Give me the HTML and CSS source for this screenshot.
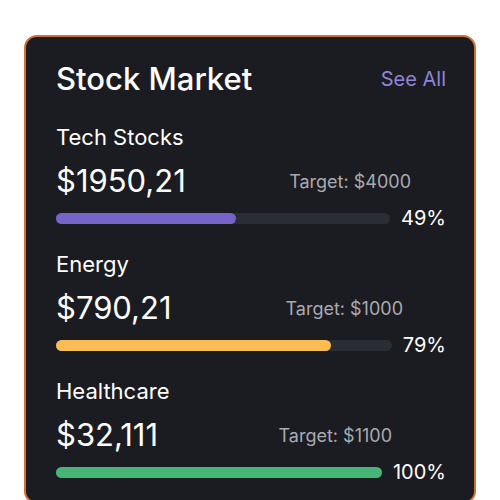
FILE: index.html
```html
<!DOCTYPE html>
<html lang="en">
<head>
  <meta charset="UTF-8">
  <title>Stock Market</title>
  <link rel="stylesheet" href="styles.css">
</head>
<body>
  <div class="card">
    <div class="header">
      <h1>Stock Market</h1>
      <a class="see-all" href="#">See All</a>
    </div>

    <div class="stock">
      <div class="name">Tech Stocks</div>
      <div class="values">
        <span class="amount">$1950,21</span>
        <span class="target">Target: $4000</span>
      </div>
      <div class="progress">
        <div class="track"><div class="fill purple" style="width: 54%"></div></div>
        <span class="percent">49%</span>
      </div>
    </div>

    <div class="stock">
      <div class="name">Energy</div>
      <div class="values">
        <span class="amount">$790,21</span>
        <span class="target">Target: $1000</span>
      </div>
      <div class="progress">
        <div class="track"><div class="fill orange" style="width: 82%"></div></div>
        <span class="percent">79%</span>
      </div>
    </div>

    <div class="stock">
      <div class="name">Healthcare</div>
      <div class="values">
        <span class="amount">$32,111</span>
        <span class="target">Target: $1100</span>
      </div>
      <div class="progress">
        <div class="track"><div class="fill green" style="width: 100%"></div></div>
        <span class="percent">100%</span>
      </div>
    </div>
  </div>
</body>
</html>
```

FILE: styles.css
```css
body {
  margin: 0;
  padding: 35px 24px 0;
  background: #ffffff;
  font-family: 'Inter', 'Liberation Sans', sans-serif;
  color: #ffffff;
}

.card {
  background: #1b1c22;
  border: 2px solid #cb7038;
  border-radius: 13px;
  padding: 21px 28px 18px 30px;
}

.header {
  display: flex;
  justify-content: space-between;
  align-items: center;
  margin-bottom: 22px;
}

h1 {
  margin: 0;
  font-size: 31px;
  font-weight: 500;
  line-height: 42px;
}

.see-all {
  color: #8c86d8;
  font-size: 20px;
  text-decoration: none;
}

.stock {
  margin-bottom: 19px;
}

.stock:last-child {
  margin-bottom: 0;
}

.name {
  font-size: 22px;
  line-height: 30px;
}

.values {
  display: flex;
  justify-content: space-between;
  align-items: center;
  margin-top: 10px;
}

.amount {
  font-size: 31px;
  line-height: 38px;
}

.target {
  font-size: 18px;
  color: #a9aaaf;
  margin-right: 35px;
}

.stock:nth-child(3) .target {
  margin-right: 43px;
}

.stock:nth-child(4) .target {
  margin-right: 54px;
}

.progress {
  display: flex;
  align-items: center;
  gap: 11px;
  margin-top: 6px;
}

.track {
  flex: 1;
  height: 11px;
  border-radius: 6px;
  background: #2b2d35;
}

.fill {
  height: 100%;
  border-radius: 6px;
}

.purple { background: #7764cb; }
.orange { background: #fbbd52; }
.green { background: #47b577; }

.percent {
  font-size: 20px;
}
```
